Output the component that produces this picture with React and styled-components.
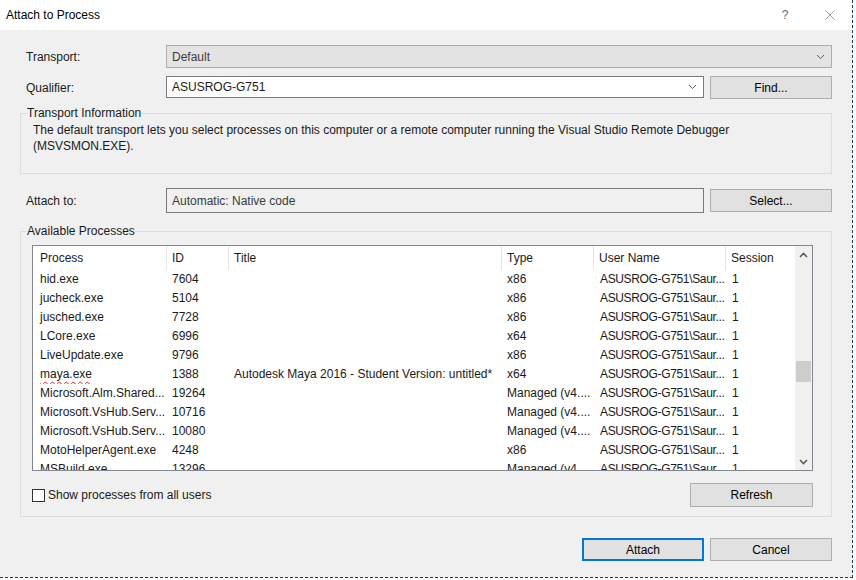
import React from "react";
import styled, { createGlobalStyle } from "styled-components";

const GlobalStyle = createGlobalStyle`
  html, body {
    margin: 0;
    padding: 0;
    background: #ffffff;
  }
  body {
    font-family: "Liberation Sans", Arial, sans-serif;
    font-size: 12px;
    color: #1a1a1a;
  }
  * {
    box-sizing: border-box;
  }
`;

const processes = [
  { name: "hid.exe", id: "7604", title: "", type: "x86" },
  { name: "jucheck.exe", id: "5104", title: "", type: "x86" },
  { name: "jusched.exe", id: "7728", title: "", type: "x86" },
  { name: "LCore.exe", id: "6996", title: "", type: "x64" },
  { name: "LiveUpdate.exe", id: "9796", title: "", type: "x86" },
  { name: "maya.exe", id: "1388", title: "Autodesk Maya 2016 - Student Version: untitled*", type: "x64", flagged: true },
  { name: "Microsoft.Alm.Shared...", id: "19264", title: "", type: "Managed (v4...." },
  { name: "Microsoft.VsHub.Serv...", id: "10716", title: "", type: "Managed (v4...." },
  { name: "Microsoft.VsHub.Serv...", id: "10080", title: "", type: "Managed (v4...." },
  { name: "MotoHelperAgent.exe", id: "4248", title: "", type: "x86" },
  { name: "MSBuild.exe", id: "13296", title: "", type: "Managed (v4...." },
];

const columns = ["Process", "ID", "Title", "Type", "User Name", "Session"];

const Chevron = ({ up }) => (
  <svg width="9" height="6" viewBox="0 0 9 6">
    <path
      d={up ? "M1 5 L4.5 1.5 L8 5" : "M1 1 L4.5 4.5 L8 1"}
      fill="none"
      stroke={up ? "#5a5a5a" : "#606060"}
      strokeWidth={up ? 1.6 : 1}
    />
  </svg>
);

const App = () => {
  return (
    <>
      <GlobalStyle />
      <Window>
        <TitleBar>
          <Caption>Attach to Process</Caption>
          <TitleButtons>
            <TitleButton>?</TitleButton>
            <TitleButton $close>
              <svg width="10" height="10" viewBox="0 0 10 10">
                <path d="M0.5 0.5 L9.5 9.5 M9.5 0.5 L0.5 9.5" stroke="#a0a0a0" strokeWidth="1" />
              </svg>
            </TitleButton>
          </TitleButtons>
        </TitleBar>

        <Body>
          <FormRow>
            <Label>Transport:</Label>
            <Combo $disabled $span>
              <span>Default</span>
              <Chevron />
            </Combo>
          </FormRow>

          <FormRow $gap={8}>
            <Label>Qualifier:</Label>
            <Combo>
              <span>ASUSROG-G751</span>
              <Chevron />
            </Combo>
            <Button>Find...</Button>
          </FormRow>

          <Group $gap={6} $bottom={19}>
            <Legend>Transport Information</Legend>
            <InfoText>
              The default transport lets you select processes on this computer or a remote computer running the Visual Studio Remote Debugger
              <br />
              (MSVSMON.EXE).
            </InfoText>
          </Group>

          <FormRow $gap={14} $height={25}>
            <Label>Attach to:</Label>
            <ReadOnlyField>Automatic: Native code</ReadOnlyField>
            <Button>Select...</Button>
          </FormRow>

          <Group $gap={10} $bottom={9}>
            <Legend>Available Processes</Legend>
            <GroupContent>
              <ListBox>
                <Table>
                  {columns.map((c, i) => (
                    <HeaderCell key={c} $first={i === 0} $last={i === columns.length - 1}>
                      {c}
                    </HeaderCell>
                  ))}
                  {processes.map((p, i) => (
                    <React.Fragment key={i}>
                      <Cell $first>{p.flagged ? <Squiggle>{p.name}</Squiggle> : p.name}</Cell>
                      <Cell>{p.id}</Cell>
                      <Cell>{p.title}</Cell>
                      <Cell>{p.type}</Cell>
                      <Cell $wide $tight>ASUSROG-G751\Saur...</Cell>
                      <Cell $wide>1</Cell>
                    </React.Fragment>
                  ))}
                </Table>
                <ScrollBar>
                  <ScrollArrow>
                    <Chevron up />
                  </ScrollArrow>
                  <Track>
                    <Thumb $offset={98} />
                  </Track>
                  <ScrollArrow>
                    <svg width="9" height="6" viewBox="0 0 9 6">
                      <path d="M1 1 L4.5 4.5 L8 1" fill="none" stroke="#5a5a5a" strokeWidth="1.6" />
                    </svg>
                  </ScrollArrow>
                </ScrollBar>
              </ListBox>

              <ListFooter>
                <CheckLabel>
                  <CheckBox />
                  Show processes from all users
                </CheckLabel>
                <Button $width={123} $height={24}>Refresh</Button>
              </ListFooter>
            </GroupContent>
          </Group>

          <Actions>
            <Button $primary>Attach</Button>
            <Button>Cancel</Button>
          </Actions>
        </Body>
      </Window>
    </>
  );
};

const Window = styled.div`
  width: 853px;
  height: 578px;
  background: #f0f0f0;
  border-right: 1px dashed #1d3b6c;
  border-bottom: 1px dashed #1d3b6c;
  display: flex;
  flex-direction: column;
`;

const TitleBar = styled.div`
  height: 30px;
  flex: none;
  background: #ffffff;
  display: flex;
  align-items: center;
  padding-left: 6px;
`;

const Caption = styled.div`
  font-size: 12px;
  color: #000;
`;

const TitleButtons = styled.div`
  margin-left: auto;
  display: flex;
  height: 100%;
`;

const TitleButton = styled.div`
  width: ${(p) => (p.$close ? 44 : 46)}px;
  height: 100%;
  display: flex;
  align-items: center;
  justify-content: center;
  color: #6a6a6a;
  font-size: 12px;
`;

const Body = styled.div`
  display: flex;
  flex-direction: column;
  padding: 15px 20px 0 20px;
`;

const FormRow = styled.div`
  display: grid;
  grid-template-columns: 140px 1fr 122px;
  column-gap: 6px;
  align-items: center;
  height: ${(p) => p.$height || 23}px;
  margin-top: ${(p) => p.$gap || 0}px;
`;

const Label = styled.div`
  padding-left: 6px;
  color: #1a1a1a;
`;

const Combo = styled.div`
  grid-column: ${(p) => (p.$span ? "2 / 4" : "auto")};
  height: ${(p) => (p.$disabled ? 23 : 22)}px;
  align-self: start;
  display: flex;
  align-items: center;
  justify-content: space-between;
  padding: 0 6px 0 5px;
  background: ${(p) => (p.$disabled ? "#e3e3e3" : "#ffffff")};
  border: 1px solid ${(p) => (p.$disabled ? "#adadad" : "#7a7a7a")};
  color: ${(p) => (p.$disabled ? "#3c3c3c" : "#1a1a1a")};
`;

const ReadOnlyField = styled.div`
  height: 25px;
  display: flex;
  align-items: center;
  padding-left: 5px;
  background: #f0f0f0;
  border: 1px solid #7a7a7a;
  color: #3a3a3a;
`;

const Button = styled.div`
  width: ${(p) => p.$width || 122}px;
  height: ${(p) => p.$height || 23}px;
  display: flex;
  align-items: center;
  justify-content: center;
  background: #e1e1e1;
  border: ${(p) => (p.$primary ? "2px solid #0078d7" : "1px solid #adadad")};
  color: #000;
`;

const Group = styled.fieldset`
  margin: ${(p) => p.$gap}px 0 0 0;
  min-width: 0;
  border: 1px solid #dcdcdc;
  padding: 0 6px ${(p) => p.$bottom}px 6px;
`;

const Legend = styled.legend`
  padding: 0;
  line-height: 16px;
  font-size: 12px;
  color: #1a1a1a;
`;

const InfoText = styled.div`
  padding: 1px 0 0 6px;
  line-height: 16px;
  white-space: nowrap;
  color: #1a1a1a;
`;

const GroupContent = styled.div`
  width: 786px;
  padding: 6px 0 0 5px;
  display: flex;
  flex-direction: column;
`;

const ListBox = styled.div`
  width: 781px;
  height: 226px;
  background: #ffffff;
  border: 1px solid #828790;
  display: flex;
  overflow: hidden;
`;

const Table = styled.div`
  flex: 1;
  display: grid;
  grid-template-columns: 134px 62px 273px 92px 132px 69px;
  grid-auto-rows: 19px;
  grid-template-rows: 24px;
  align-content: start;
`;

const HeaderCell = styled.div`
  line-height: 24px;
  padding-left: ${(p) => (p.$first ? 7 : 5)}px;
  border-right: ${(p) => (p.$last ? "none" : "1px solid #e5e5e5")};
  color: #1a1a1a;
  white-space: nowrap;
  overflow: hidden;
`;

const Cell = styled.div`
  line-height: 19px;
  padding-left: ${(p) => (p.$first ? 7 : p.$wide ? 6 : 5)}px;
  letter-spacing: ${(p) => (p.$tight ? "-0.35px" : "normal")};
  white-space: nowrap;
  overflow: hidden;
  color: #1a1a1a;
`;

const Squiggle = styled.span`
  text-decoration: underline wavy #e0242b;
  text-decoration-skip-ink: none;
  text-underline-offset: 3px;
  text-decoration-thickness: 1px;
`;

const ScrollBar = styled.div`
  width: 17px;
  flex: none;
  background: #f0f0f0;
  display: flex;
  flex-direction: column;
`;

const ScrollArrow = styled.div`
  height: 17px;
  flex: none;
  display: flex;
  align-items: center;
  justify-content: center;
`;

const Track = styled.div`
  flex: 1;
  padding: 0 1px;
`;

const Thumb = styled.div`
  margin-top: ${(p) => p.$offset}px;
  height: 21px;
  background: #cdcdcd;
`;

const ListFooter = styled.div`
  width: 781px;
  margin-top: 12px;
  display: flex;
  align-items: center;
  justify-content: space-between;
`;

const CheckLabel = styled.div`
  display: flex;
  align-items: center;
  gap: 3px;
  color: #1a1a1a;
`;

const CheckBox = styled.span`
  width: 13px;
  height: 13px;
  background: #ffffff;
  border: 1px solid #333333;
`;

const Actions = styled.div`
  margin-top: 21px;
  display: flex;
  justify-content: flex-end;
  gap: 6px;
`;

export default App;
